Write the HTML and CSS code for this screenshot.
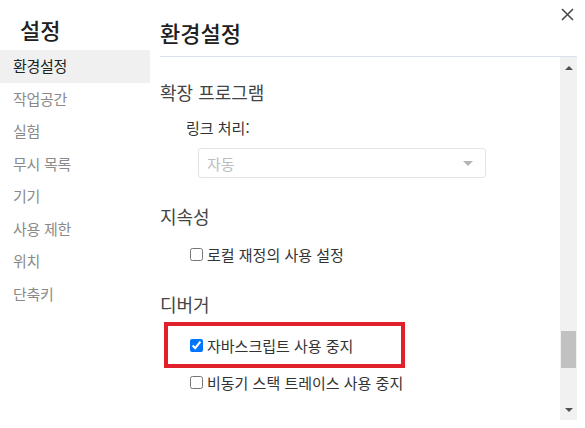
FILE: index.html
```html
<!DOCTYPE html>
<html lang="ko">
<head>
<meta charset="utf-8">
<link rel="stylesheet" href="styles.css">
</head>
<body>
<div class="app">
  <aside class="sidebar">
    <div class="side-title">설정</div>
    <ul class="nav">
      <li class="nav-item active">환경설정</li>
      <li class="nav-item">작업공간</li>
      <li class="nav-item">실험</li>
      <li class="nav-item">무시 목록</li>
      <li class="nav-item">기기</li>
      <li class="nav-item">사용 제한</li>
      <li class="nav-item">위치</li>
      <li class="nav-item">단축키</li>
    </ul>
  </aside>
  <main class="main">
    <header class="main-header">환경설정</header>
    <div class="body">
      <div class="content">
        <div class="section-title first">확장 프로그램</div>
        <div class="label">링크 처리:</div>
        <div class="select"><span class="select-text">자동</span><span class="select-arrow"></span></div>
        <div class="section-title persist">지속성</div>
        <label class="check-row row-local"><input type="checkbox" class="cb"><span>로컬 재정의 사용 설정</span></label>
        <div class="section-title debug">디버거</div>
        <div class="highlight">
          <label class="check-row"><input type="checkbox" class="cb" checked><span>자바스크립트 사용 중지</span></label>
        </div>
        <label class="check-row row-async"><input type="checkbox" class="cb"><span>비동기 스택 트레이스 사용 중지</span></label>
      </div>
      <div class="scrollbar">
        <div class="sb-btn"><span class="tri-up"></span></div>
        <div class="sb-track"><div class="sb-thumb"></div></div>
        <div class="sb-btn"><span class="tri-down"></span></div>
      </div>
    </div>
  </main>
  <button class="close" aria-label="닫기">
    <svg width="13" height="13" viewBox="0 0 13 13"><path d="M1 1 L12 12 M12 1 L1 12" stroke="#4a4a4a" stroke-width="1.6" fill="none"/></svg>
  </button>
</div>
</body>
</html>
```

FILE: styles.css
```css
* { box-sizing: border-box; }
html, body { margin: 0; padding: 0; background: #fff; }
body {
  width: 585px;
  height: 428px;
  overflow: hidden;
  font-family: "Noto Sans CJK KR", "Noto Sans", sans-serif;
  color: #333;
}
.app {
  position: relative;
  display: flex;
  width: 585px;
  height: 428px;
}
.sidebar {
  width: 150px;
  flex: none;
}
.side-title {
  height: 50px;
  padding-left: 20px;
  font-size: 22px;
  line-height: 58px;
  color: #202020;
  font-weight: 500;
}
.nav {
  list-style: none;
  margin: 0;
  padding: 0;
}
.nav-item {
  height: 32.5px;
  line-height: 32px;
  padding-left: 13px;
  font-size: 15px;
  color: #8a8a8a;
  letter-spacing: -0.3px;
}
.nav-item.active {
  background: #f0f0f0;
  color: #222;
}
.main {
  flex: 1;
  display: flex;
  flex-direction: column;
  padding-left: 10px;
  padding-right: 8px;
}
.main-header {
  height: 57px;
  border-bottom: 1px solid #dbe2ee;
  font-size: 22px;
  line-height: 64px;
  color: #202020;
  font-weight: 500;
}
.body {
  display: flex;
  height: 363px;
}
.content {
  flex: 1;
  display: flex;
  flex-direction: column;
  align-items: flex-start;
}
.section-title {
  font-size: 18px;
  line-height: 24px;
  height: 24px;
  color: #444;
}
.section-title.first { margin-top: 23px; }
.section-title.persist { margin-top: 26px; }
.section-title.debug { margin-top: 28px; }
.label {
  margin-top: 14px;
  margin-left: 26px;
  font-size: 15px;
  line-height: 20px;
  color: #333;
}
.select {
  margin-top: 10px;
  margin-left: 38px;
  width: 288px;
  height: 30px;
  border: 1px solid #e3e3e3;
  border-radius: 3px;
  display: flex;
  align-items: center;
  justify-content: space-between;
  padding: 0 12px 0 8px;
}
.select-text {
  font-size: 15px;
  color: #bdbdbd;
}
.select-arrow {
  width: 0;
  height: 0;
  border-left: 5px solid transparent;
  border-right: 5px solid transparent;
  border-top: 5px solid #b5b5b5;
}
.check-row {
  display: flex;
  align-items: center;
  height: 20px;
  padding-left: 30px;
  font-size: 15px;
  color: #333;
}
.check-row .cb {
  width: 13px;
  height: 13px;
  margin: 0 4px 0 0;
  flex: none;
}
.row-local { margin-top: 16px; }
.row-async { margin-top: 4px; }
.highlight {
  margin-top: 6px;
  margin-left: 4px;
  width: 241px;
  height: 46px;
  border: 4px solid #e0202b;
  display: flex;
  align-items: center;
}
.highlight .check-row { padding-left: 22px; }
.scrollbar {
  width: 17px;
  flex: none;
  background: #f1f1f1;
  display: flex;
  flex-direction: column;
}
.sb-btn {
  height: 17px;
  display: flex;
  align-items: center;
  justify-content: center;
}
.tri-up {
  width: 0; height: 0;
  border-left: 4px solid transparent;
  border-right: 4px solid transparent;
  border-bottom: 4px solid #505050;
  margin-top: 4px;
}
.tri-down {
  width: 0; height: 0;
  border-left: 4px solid transparent;
  border-right: 4px solid transparent;
  border-top: 4px solid #505050;
  margin-top: -4px;
}
.sb-track {
  flex: 1;
  padding: 0 1px;
}
.sb-thumb {
  margin-top: 257px;
  height: 37px;
  background: #c1c1c1;
}
.close {
  position: absolute;
  top: 8px;
  left: 561px;
  width: 13px;
  height: 13px;
  padding: 0;
  border: 0;
  background: none;
  display: block;
}
.close svg { display: block; }
```
